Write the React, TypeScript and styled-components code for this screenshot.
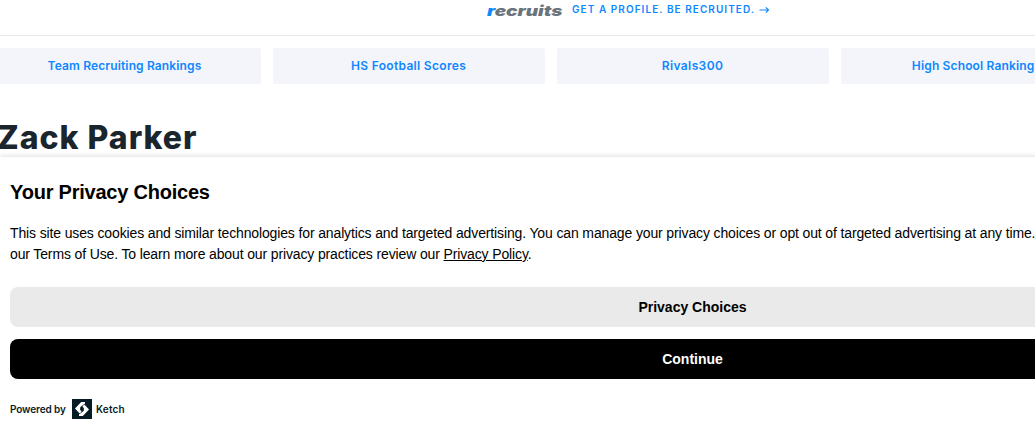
import React from 'react';
import styled, { createGlobalStyle } from 'styled-components';

const links = [
  { label: 'Team Recruiting Rankings', spacing: '0.14px' },
  { label: 'HS Football Scores', spacing: '0.32px' },
  { label: 'Rivals300', spacing: '0.4px' },
  { label: 'High School Rankings', spacing: '0.15px' },
];

const KetchMark = () => (
  <svg width="20" height="20" viewBox="0 0 20 20">
    <rect width="20" height="20" fill="#071b24" />
    <path d="M13 3H9.2L3 9.4 7.6 14.6 9.6 12.8 8 10.4 8.4 8 13 4.4z" fill="#fff" />
    <path d="M7 17h3.8L17 10.6 12.4 5.4 10.4 7.2 12 9.6 11.6 12 7 15.6z" fill="#fff" />
  </svg>
);

const Arrow = () => (
  <svg width="11" height="8" viewBox="0 0 11 8" fill="none" stroke="#0f87ff" strokeWidth="1.2">
    <path d="M0.5 4H9.5M6.8 1.3L9.5 4L6.8 6.7" />
  </svg>
);

const App = () => {
  return (
    <Page>
      <GlobalStyle />
      <Promo>
        <Logo><b>r</b>ecruits</Logo>
        <PromoText>GET A PROFILE. BE RECRUITED.</PromoText>
        <Arrow />
      </Promo>
      <Nav>
        {links.map(({ label, spacing }) => (
          <NavLink key={label} $spacing={spacing}>{label}</NavLink>
        ))}
      </Nav>
      <Name>Zack Parker</Name>
      <Banner>
        <Title>Your Privacy Choices</Title>
        <Description>
          This site uses cookies and similar technologies for analytics and targeted advertising. You can manage your privacy choices or opt out of targeted advertising at any time.
          <br />
          our Terms of Use. To learn more about our privacy practices review our <u>Privacy Policy</u>.
        </Description>
        <Button>Privacy Choices</Button>
        <Button $primary>Continue</Button>
        <Powered>
          <PoweredText>Powered by</PoweredText>
          <KetchMark />
          <Ketch>Ketch</Ketch>
        </Powered>
      </Banner>
    </Page>
  );
};

const GlobalStyle = createGlobalStyle`
  * {
    box-sizing: border-box;
  }
  body {
    margin: 0;
    background: #fff;
    overflow: hidden;
  }
  #root {
    overflow: hidden;
  }
`;
const Page = styled.div`
  width: 1385px;
  height: 435px;
  display: flex;
  flex-direction: column;
  overflow: hidden;
  font-family: 'Liberation Sans', Arial, sans-serif;
`;
const Promo = styled.div`
  flex: none;
  display: flex;
  align-items: center;
  height: 36px;
  padding: 0 0 16px 487px;
  border-bottom: 1px solid #e8e8e8;
  white-space: nowrap;
`;
const Logo = styled.div`
  width: 85px;
  padding-top: 2px;
  font: italic 900 14.5px/18px Inter, sans-serif;
  color: #6b737b;
  transform: scaleX(1.31);
  transform-origin: left center;

  b {
    font-weight: 900;
    color: #0f87ff;
  }
`;
const PromoText = styled.div`
  width: 187px;
  padding-bottom: 1px;
  font: 600 10px/18px Inter, sans-serif;
  letter-spacing: 1.06px;
  color: #0f87ff;
`;
const Nav = styled.nav`
  flex: none;
  display: grid;
  grid-template-columns: repeat(5, 272px);
  gap: 12px;
  margin: 12px 0 0 -11px;
`;
const NavLink = styled.a<{ $spacing: string }>`
  height: 36px;
  padding-right: 1px;
  border-radius: 2px;
  background: #f4f5fa;
  color: #0f87ff;
  font: 600 12px/36px Inter, sans-serif;
  letter-spacing: ${({ $spacing }) => $spacing};
  text-align: center;
`;
const Name = styled.h1`
  flex: none;
  height: 40px;
  margin: 33px 0 0 -3px;
  font: 850 32px/42px Inter, sans-serif;
  letter-spacing: 1px;
  color: #1b252d;
`;
const Banner = styled.section`
  position: relative;
  flex: 1;
  padding: 23px 10px 0;
  background: #fff;
  box-shadow: 0 0 6px rgba(0, 0, 0, .17);
`;
const Title = styled.h2`
  margin: 0;
  font-size: 20px;
  line-height: 24px;
  letter-spacing: -0.22px;
  color: #000;
`;
const Description = styled.p`
  margin: 19px 0 22px;
  font-size: 14px;
  line-height: 21px;
  letter-spacing: -0.134px;
  white-space: nowrap;
  color: #000;
`;
const Button = styled.button<{ $primary?: boolean }>`
  display: block;
  width: 1365px;
  height: 40px;
  margin-bottom: 12px;
  padding: 0;
  border: 0;
  border-radius: 8px;
  background: ${({ $primary }) => ($primary ? '#000' : '#eaeaea')};
  color: ${({ $primary }) => ($primary ? '#fff' : '#000')};
  font: bold 14px 'Liberation Sans', Arial, sans-serif;
`;
const Powered = styled.div`
  display: flex;
  align-items: center;
  height: 20px;
  margin-top: 20px;
  font: 600 10px/20px Inter, sans-serif;
  color: #071b24;
`;
const PoweredText = styled.span`
  width: 62px;
  letter-spacing: -0.1px;
`;
const Ketch = styled.span`
  margin-left: 4px;
  letter-spacing: 0.2px;
`;

export default App;
